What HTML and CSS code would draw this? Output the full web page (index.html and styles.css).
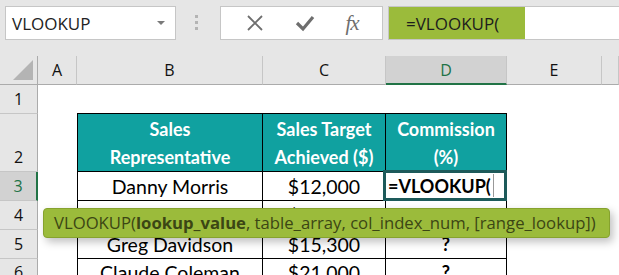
FILE: index.html
```html
<!DOCTYPE html>
<html lang="en">
<head>
  <meta charset="UTF-8" />
  <title>VLOOKUP</title>
  <link rel="stylesheet" href="styles.css">
</head>
<body>
  <div class="toolbar">
    <div class="name-box">
      <span>VLOOKUP</span>
      <span class="drop"></span>
    </div>
    <div class="grip"><i></i><i></i><i></i></div>
    <div class="fx-buttons">
      <svg width="18" height="18" viewBox="0 0 18 18"><path d="M2 2 L16 16 M16 2 L2 16" stroke="#6e6e6e" stroke-width="1.8" fill="none"/></svg>
      <svg width="20" height="18" viewBox="0 0 20 18"><path d="M2 9 L8 15 L18 3" stroke="#6e6e6e" stroke-width="3.2" fill="none"/></svg>
      <span class="fx">fx</span>
    </div>
    <div class="formula">
      <span class="hl">=VLOOKUP(</span>
    </div>
  </div>

  <div class="sheet">
    <div class="ch corner"><span class="tri"></span></div>
    <div class="ch">A</div>
    <div class="ch">B</div>
    <div class="ch">C</div>
    <div class="ch sel">D</div>
    <div class="ch">E</div>
    <div class="ch"></div>

    <div class="rh">1</div>
    <div class="c"></div>
    <div class="c top"></div>
    <div class="c top"></div>
    <div class="c top"></div>
    <div class="c"></div>
    <div class="c"></div>

    <div class="rh">2</div>
    <div class="c"></div>
    <div class="c t first head">Sales<br>Representative</div>
    <div class="c t head">Sales Target<br>Achieved ($)</div>
    <div class="c t head">Commission<br>(%)</div>
    <div class="c"></div>
    <div class="c"></div>

    <div class="rh sel">3</div>
    <div class="c"></div>
    <div class="c t first">Danny Morris</div>
    <div class="c t">$12,000</div>
    <div class="c t active">=VLOOKUP(<span class="caret"></span></div>
    <div class="c"></div>
    <div class="c"></div>

    <div class="rh">4</div>
    <div class="c"></div>
    <div class="c t first">Nina Lawson</div>
    <div class="c t">$18,500</div>
    <div class="c t q">?</div>
    <div class="c"></div>
    <div class="c"></div>

    <div class="rh">5</div>
    <div class="c"></div>
    <div class="c t first">Greg Davidson</div>
    <div class="c t">$15,300</div>
    <div class="c t q">?</div>
    <div class="c"></div>
    <div class="c"></div>

    <div class="rh">6</div>
    <div class="c"></div>
    <div class="c t first">Claude Coleman</div>
    <div class="c t">$21,000</div>
    <div class="c t q">?</div>
    <div class="c"></div>
    <div class="c"></div>

    <div class="tip">VLOOKUP(<b>lookup_value</b>, table_array, col_index_num, [range_lookup])</div>
  </div>
</body>
</html>
```

FILE: styles.css
```css
:root {
  --ui: #e6e6e6;
  --line: #c6c6c6;
  --teal: #10a1a0;
  --excel: #217346;
  --lime: #9bbb3b;
}

body {
  margin: 0;
  background: #fff;
  font-family: "Open Sans", sans-serif;
  overflow: hidden;
}

.toolbar {
  display: flex;
  align-items: flex-start;
  height: 56px;
  box-sizing: border-box;
  padding: 6px 0 0 5px;
  background: var(--ui);
}

.name-box {
  display: flex;
  align-items: center;
  justify-content: space-between;
  width: 171px;
  height: 34px;
  box-sizing: border-box;
  padding: 0 10px 0 6px;
  background: #fff;
  border: 1px solid var(--line);
  font-size: 17px;
  color: #222;
}

.drop {
  width: 0;
  height: 0;
  border-left: 4px solid transparent;
  border-right: 4px solid transparent;
  border-top: 4px solid #7a7a7a;
}

.grip {
  display: flex;
  flex-direction: column;
  gap: 3px;
  margin: 9px 22px 0 19px;
}

.grip i {
  width: 3px;
  height: 3px;
  background: #b4b4b4;
}

.fx-buttons {
  display: flex;
  align-items: center;
  justify-content: space-around;
  width: 163px;
  height: 34px;
  box-sizing: border-box;
  padding: 0 8px 0 10px;
  background: #fff;
  border: 1px solid var(--line);
}

.fx {
  font-family: "Liberation Serif", serif;
  font-style: italic;
  font-size: 21px;
  color: #6e6e6e;
  letter-spacing: -1px;
}

.formula {
  flex: 1;
  display: flex;
  height: 34px;
  margin-left: 5px;
  box-sizing: border-box;
  background: #fff;
  border: 1px solid var(--line);
  border-right: none;
}

.hl {
  display: flex;
  align-items: center;
  width: 136px;
  box-sizing: border-box;
  padding-left: 17px;
  background: var(--lime);
  font-size: 17px;
  color: #1d1d1d;
}

.sheet {
  position: relative;
  display: grid;
  grid-template-columns: 38px 39px 186px 123px 121px 95px 1fr;
  grid-template-rows: 29px 29px 58px 29px 29px 29px 1fr;
  height: 219px;
  font-family: "Lato", sans-serif;
  font-size: 19.5px;
  color: #000;
}

.ch {
  display: flex;
  align-items: center;
  justify-content: center;
  background: var(--ui);
  border-right: 1px solid var(--line);
  border-bottom: 1px solid #ababab;
  font-family: "Open Sans", sans-serif;
  font-size: 16px;
  color: #111;
}

.ch.sel {
  background: #d2d2d2;
  color: var(--excel);
  border-bottom: 2px solid var(--excel);
}

.corner {
  position: relative;
  border-right-color: #ababab;
}

.tri {
  position: absolute;
  right: 4px;
  bottom: 4px;
  width: 0;
  height: 0;
  border-left: 20px solid transparent;
  border-bottom: 20px solid #b4b4b4;
}

.rh {
  display: flex;
  align-items: flex-end;
  justify-content: center;
  padding-bottom: 2px;
  box-sizing: border-box;
  background: var(--ui);
  border-right: 1px solid #ababab;
  border-bottom: 1px solid var(--line);
  font-family: "Open Sans", sans-serif;
  font-size: 16px;
  line-height: 24px;
  color: #111;
}

.rh.sel {
  background: #d2d2d2;
  color: var(--excel);
  border-right: 2px solid var(--excel);
}

.c {
  box-sizing: border-box;
}

.c.top {
  border-bottom: 1px solid #000;
}

.t {
  display: flex;
  align-items: flex-end;
  justify-content: center;
  border-right: 1px solid #000;
  border-bottom: 1px solid #000;
  line-height: 27px;
  text-align: center;
  white-space: nowrap;
}

.t.first {
  border-left: 1px solid #000;
}

.head {
  background: var(--teal);
  color: #fff;
  font-size: 18px;
  font-weight: bold;
  line-height: 28px;
}

.q {
  font-size: 18px;
  font-weight: bold;
}

.active {
  position: relative;
  justify-content: flex-start;
  padding-left: 2px;
  font-size: 18px;
  font-weight: bold;
}

.active::after {
  content: "";
  position: absolute;
  top: -2px;
  left: -3px;
  right: -1px;
  bottom: -1px;
  border: 3px solid #1d5a5a;
}

.caret {
  width: 1px;
  height: 23px;
  margin: 0 0 3px 2px;
  background: #999;
}

.tip {
  position: absolute;
  left: 43px;
  top: 152px;
  width: 567px;
  height: 30px;
  box-sizing: border-box;
  padding-left: 10px;
  background: var(--lime);
  border: 1px solid #86a22e;
  border-radius: 4px;
  box-shadow: 3px 4px 8px rgba(0, 0, 0, 0.25);
  font-family: "Open Sans", sans-serif;
  font-size: 16.7px;
  line-height: 28px;
  color: #3b4614;
  white-space: nowrap;
}
```
